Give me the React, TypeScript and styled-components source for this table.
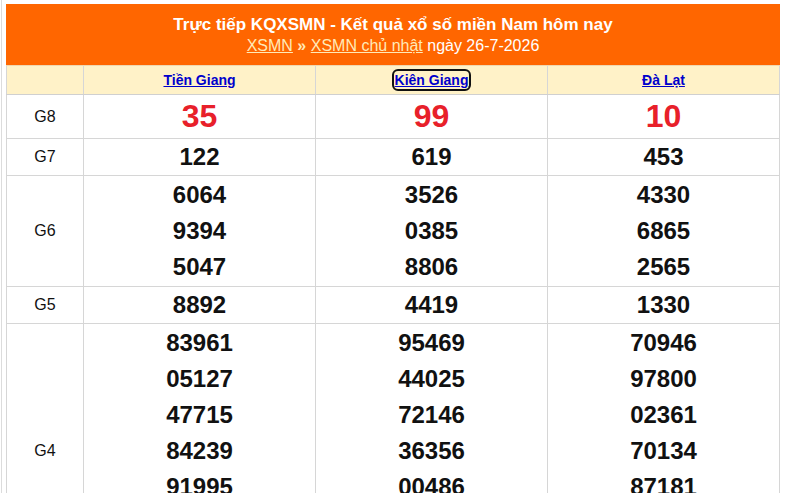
import React from "react";
import styled, { createGlobalStyle, css } from "styled-components";

const Global = createGlobalStyle`
  html, body { margin: 0; padding: 0; background: #fff; }
  body { font-family: "Liberation Sans", Arial, sans-serif; }
`;

const Page = styled.div`
  margin-left: 1px;
  border-left: 1px solid #dcdcdc;
  padding: 4px 0 0 4px;
  min-height: 493px;
  box-sizing: border-box;
`;

const Panel = styled.div`
  width: 774px;
`;

const Banner = styled.div`
  background: #ff6600;
  color: #fff;
  text-align: center;
  height: 62px;
  box-sizing: border-box;
  padding-top: 10px;
  border-bottom: 1px solid #f0d8b0;
`;

const Title = styled.h1`
  margin: 0;
  font-size: 17px;
  font-weight: bold;
  line-height: 21px;
`;

const Sub = styled.div`
  font-size: 16px;
  line-height: 22px;
  color: #fff;
`;

const SubLink = styled.a`
  color: #ffeab8;
  text-decoration: underline;
`;

const Sep = styled.span`
  color: #ffeab8;
  font-weight: bold;
`;

const Table = styled.table`
  width: 774px;
  border-collapse: collapse;
  table-layout: fixed;
`;

const HeadCell = styled.th`
  background: #fff2c8;
  height: 28px;
  padding: 0;
  border-left: 1px solid #d6d6d6;
  border-right: 1px solid #d6d6d6;
  border-bottom: 1px solid #d0d0d0;
  text-align: center;
  font-size: 14px;
  font-weight: bold;
`;

const ProvLink = styled.a<{ $focused?: boolean }>`
  color: #0000cc;
  text-decoration: underline;
  ${(p) =>
    p.$focused &&
    css`
      outline: 2px solid #111;
      outline-offset: 1px;
      border-radius: 3px;
    `}
`;

const Label = styled.td`
  width: 77px;
  border: 1px solid #d6d6d6;
  text-align: center;
  vertical-align: middle;
  font-size: 16px;
  color: #111;
  padding: 0;
`;

const Cell = styled.td<{ $pad?: number }>`
  border: 1px solid #d6d6d6;
  text-align: center;
  vertical-align: middle;
  padding: ${(p) => p.$pad ?? 0}px 0;
`;

const Num = styled.div<{ $big?: boolean }>`
  font-weight: bold;
  font-size: ${(p) => (p.$big ? "32px" : "24px")};
  line-height: ${(p) => (p.$big ? "43px" : "36px")};
  color: ${(p) => (p.$big ? "#e8202a" : "#111")};
`;

type Row = { label: string; values: string[][]; big?: boolean; pad?: number };

const rows: Row[] = [
  { label: "G8", values: [["35"], ["99"], ["10"]], big: true },
  { label: "G7", values: [["122"], ["619"], ["453"]] },
  {
    label: "G6",
    values: [
      ["6064", "9394", "5047"],
      ["3526", "0385", "8806"],
      ["4330", "6865", "2565"],
    ],
    pad: 1,
  },
  { label: "G5", values: [["8892"], ["4419"], ["1330"]] },
  {
    label: "G4",
    values: [
      ["83961", "05127", "47715", "84239", "91995", "00000", "00000"],
      ["95469", "44025", "72146", "36356", "00486", "00000", "00000"],
      ["70946", "97800", "02361", "70134", "87181", "00000", "00000"],
    ],
    pad: 1,
  },
];

export default function App() {
  return (
    <>
      <Global />
      <Page>
        <Panel>
          <Banner>
            <Title>Trực tiếp KQXSMN - Kết quả xổ số miền Nam hôm nay</Title>
            <Sub>
              <SubLink href="#">XSMN</SubLink> <Sep>»</Sep>{" "}
              <SubLink href="#">XSMN chủ nhật</SubLink> ngày 26-7-2026
            </Sub>
          </Banner>
          <Table>
            <colgroup>
              <col style={{ width: 77 }} />
              <col />
              <col />
              <col />
            </colgroup>
            <thead>
              <tr>
                <HeadCell />
                <HeadCell>
                  <ProvLink href="#">Tiền Giang</ProvLink>
                </HeadCell>
                <HeadCell>
                  <ProvLink href="#" $focused>
                    Kiên Giang
                  </ProvLink>
                </HeadCell>
                <HeadCell>
                  <ProvLink href="#">Đà Lạt</ProvLink>
                </HeadCell>
              </tr>
            </thead>
            <tbody>
              {rows.map((r) => (
                <tr key={r.label}>
                  <Label>{r.label}</Label>
                  {r.values.map((col, i) => (
                    <Cell key={i} $pad={r.pad}>
                      {col.map((v, j) => (
                        <Num key={j} $big={r.big}>
                          {v}
                        </Num>
                      ))}
                    </Cell>
                  ))}
                </tr>
              ))}
            </tbody>
          </Table>
        </Panel>
      </Page>
    </>
  );
}
